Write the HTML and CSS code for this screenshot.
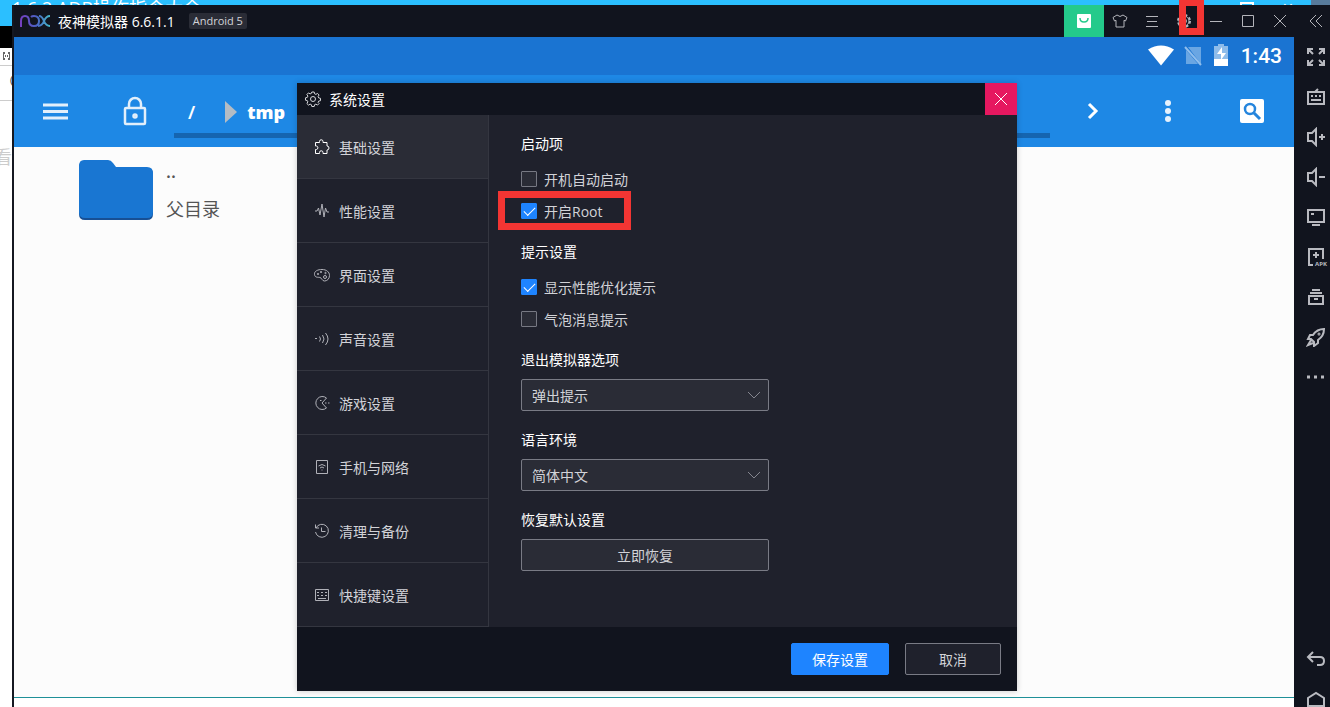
FILE: index.html
```html
<!DOCTYPE html>
<html lang="zh-CN">
<head>
  <meta charset="UTF-8">
  <title>夜神模拟器</title>
  <meta name="viewport" content="width=device-width, initial-scale=1.0">
  <link rel="stylesheet" href="styles.css">
</head>
<body>
  <div class="backdrop">
    <span class="backdrop-title">1.6.2 ADB操作指令大全</span>
    <span class="backdrop-box"></span>
    <span class="backdrop-close">✕</span>
    <span class="backdrop-corner"></span>
  </div>

  <div class="desktop">
    <div class="behind">
      <div class="behind-blue"></div>
      <div class="behind-black"></div>
      <div class="behind-tab">
        <svg width="12" height="12" viewBox="0 0 12 12"><path d="M3 2h2v2H3zM3 8h2v2H3zM5 5h1v2H5zM8 2h2v2H8zM8 8h2v2H8zM7 5h1v2H7zM3 4h1v4H3zM9 4h1v4H9z" fill="#666"/></svg>
      </div>
      <div class="behind-bar">(</div>
      <div class="behind-page">看</div>
    </div>

    <div class="window">
      <header class="titlebar">
        <svg class="logo" width="32" height="14" viewBox="0 0 32 14" fill="none" stroke-width="2">
          <defs>
            <linearGradient id="nox" x1="0" y1="0" x2="32" y2="0" gradientUnits="userSpaceOnUse">
              <stop offset="0" stop-color="#7a3cc0"/>
              <stop offset="0.55" stop-color="#4a62c4"/>
              <stop offset="1" stop-color="#45c0c8"/>
            </linearGradient>
          </defs>
          <path d="M2 13V7q0-5 4-5t4 5q0 5 5 5t5-5-5-5q-2 0-3 1M20 2q3 0 5 5t6 5M31 2q-4 0-6 5t-6 5" stroke="url(#nox)"/>
        </svg>
        <span class="app-name">夜神模拟器 6.6.1.1</span>
        <span class="badge">Android 5</span>
        <div class="title-actions">
          <button class="title-btn store" aria-label="应用中心">
            <svg width="16" height="16" viewBox="0 0 16 16"><rect x="1" y="1" width="14" height="14" rx="1" fill="#fff"/><path d="M4 5q0 4 4 4t4-4" fill="none" stroke="#24ca8b" stroke-width="1.500"/></svg>
          </button>
          <button class="title-btn" aria-label="主题">
            <svg width="16" height="16" viewBox="0 0 16 16"><path d="M5 2L1 4.500 2.500 8 4 7.300V14h8V7.300L13.500 8 15 4.500 11 2Q8 5 5 2z"/></svg>
          </button>
          <button class="title-btn" aria-label="菜单">
            <svg width="16" height="16" viewBox="0 0 16 16"><path d="M2 3.500h12M3 8.500h10M2 13.500h12"/></svg>
          </button>
          <button class="title-btn gear-btn" aria-label="设置">
            <svg width="16" height="16" viewBox="0 0 16 16"><circle cx="8" cy="8" r="2.500"/><circle cx="8" cy="8" r="6" stroke-dasharray="2.700 2" stroke-width="2"/><circle cx="8" cy="8" r="5"/></svg>
            <span class="mark mark-gear"></span>
          </button>
          <button class="title-btn" aria-label="最小化">
            <svg width="16" height="16" viewBox="0 0 16 16"><path d="M2 8.500h12"/></svg>
          </button>
          <button class="title-btn" aria-label="最大化">
            <svg width="16" height="16" viewBox="0 0 16 16"><path d="M2.500 2.500h11v11h-11z"/></svg>
          </button>
          <button class="title-btn" aria-label="关闭">
            <svg width="16" height="16" viewBox="0 0 16 16"><path d="M2 2l12 12M14 2L2 14"/></svg>
          </button>
          <button class="title-btn collapse" aria-label="收起">
            <svg width="16" height="16" viewBox="0 0 16 16"><path d="M8 2L2 8l6 6M14 2L8 8l6 6"/></svg>
          </button>
        </div>
      </header>

      <div class="window-body">
        <div class="screen">
          <div class="statusbar">
            <svg width="28" height="24" viewBox="0 0 28 24"><path d="M1 5.500Q14-2.500 27 5.500L14 21.500z" fill="#fff"/></svg>
            <svg width="22" height="24" viewBox="0 0 22 24"><path d="M5 3h13v17zM3 6v14h12z" fill="#6aa6e3"/><path d="M2 3l16 18" stroke="#8fbdec" stroke-width="2"/></svg>
            <svg width="16" height="24" viewBox="0 0 16 24"><path d="M5 0h6v2h4v13H1V2h4z" fill="#8ebcea"/><path d="M1 15h14v7H1z" fill="#fff"/><path d="M9 3L4 10h4v6l5-7H9z" fill="#fff"/></svg>
            <span class="clock">1:43</span>
          </div>

          <div class="appbar">
            <button class="bar-btn" aria-label="菜单">
              <svg width="28" height="24" viewBox="0 0 28 24"><path d="M2 6h25M2 12.500h25M2 19h25" stroke="#e2effb" stroke-width="3"/></svg>
            </button>
            <button class="bar-btn" aria-label="锁定">
              <svg width="24" height="30" viewBox="0 0 24 30" fill="none" stroke="#e2effb" stroke-width="2.500"><rect x="2" y="12" width="20" height="16" rx="1"/><path d="M6 12V8a6 6 0 0 1 12 0v4"/><circle cx="12" cy="20" r="1.500"/></svg>
            </button>
            <div class="path">
              <span>/</span>
              <svg width="12" height="22" viewBox="0 0 12 22"><path d="M0 0l12 11L0 22z" fill="#b4bcc4"/></svg>
              <b>tmp</b>
            </div>
            <button class="bar-btn" aria-label="前进">
              <svg width="14" height="20" viewBox="0 0 14 20"><path d="M4 3l7 7-7 7" fill="none" stroke="#fff" stroke-width="3"/></svg>
            </button>
            <button class="bar-btn" aria-label="更多">
              <svg width="8" height="24" viewBox="0 0 8 24" fill="#e6f1fc"><circle cx="4" cy="4" r="3"/><circle cx="4" cy="12" r="3"/><circle cx="4" cy="20" r="3"/></svg>
            </button>
            <button class="bar-btn search" aria-label="搜索">
              <svg width="26" height="26" viewBox="0 0 26 26" fill="none"><rect x="1" y="1" width="24" height="24" rx="2" fill="#fff"/><circle cx="11" cy="11" r="5" stroke="#2585dd" stroke-width="2.500"/><path d="M15 15l6 6" stroke="#2585dd" stroke-width="3"/></svg>
            </button>
          </div>

          <a class="folder" href="#">
            <svg width="76" height="64" viewBox="0 0 76 64"><path d="M6 3h24q3 0 5 3l3 3h31q6 0 6 6v40q0 6-6 6H7q-6 0-6-6V8q0-5 5-5z" fill="#174f94"/><path d="M6 1h24q3 0 5 3l3 4h31q6 0 6 6v39q0 6-6 6H7q-6 0-6-6V7q0-6 5-6z" fill="#1976d2"/></svg>
            <span class="folder-text">
              <span class="dots">..</span>
              <span class="folder-name">父目录</span>
            </span>
          </a>

          <div class="screen-end"></div>

          <form class="dialog">
            <div class="dialog-head">
              <svg width="16" height="16" viewBox="0 0 16 16"><circle cx="8" cy="8" r="2.500"/><path d="M6.800 1h2.400l.4 1.800 1.300.6 1.600-1 1.600 1.600-1 1.600.6 1.300 1.800.4v2.400l-1.800.4-.6 1.300 1 1.100-1.600 1.600-1.600-1-1.300.6-.4 1.800H6.800l-.4-1.800-1.300-.6-1.600 1-1.600-1.600 1-1.600-.6-1.300L.5 9.200V6.800l1.800-.4.6-1.300-1-1.600 1.600-1.600 1.600 1 1.300-.6z"/></svg>
              <span>系统设置</span>
              <button type="button" class="dialog-close" aria-label="关闭">
                <svg width="16" height="16" viewBox="0 0 16 16"><path d="M2 2l12 12M14 2L2 14"/></svg>
              </button>
            </div>

            <div class="dialog-body">
              <nav class="menu">
                <a class="menu-item active" href="#">
                  <svg width="16" height="16" viewBox="0 0 16 16"><path d="M1.500 3.500h4V2.500a1.500 1.500 0 0 1 3.500 0v1h4v3.500a2 2 0 0 1 0 4v3.500h-4v-1a1.700 1.700 0 0 0-3.500 0v1h-4v-4h1a1.800 1.800 0 0 0 0-3.500h-1z"/></svg>
                  基础设置
                </a>
                <a class="menu-item" href="#">
                  <svg width="16" height="16" viewBox="0 0 16 16"><path d="M1 8h2l1.500-3L6 12 8 1l2 13 1.500-9L13 9h2"/></svg>
                  性能设置
                </a>
                <a class="menu-item" href="#">
                  <svg width="16" height="16" viewBox="0 0 16 16"><path d="M8 2.500c4.500 0 7.500 2.500 7.500 6S13 14 10.500 14 8 11 6 10.500 1 11 .5 7.500 4 2.500 8 2.500z"/><circle cx="4" cy="7" r=".7"/><circle cx="7" cy="5" r=".7"/><circle cx="11.500" cy="6" r=".7"/><circle cx="11" cy="10" r="1.500"/></svg>
                  界面设置
                </a>
                <a class="menu-item" href="#">
                  <svg width="16" height="16" viewBox="0 0 16 16"><path d="M1 7.500h2M5.500 5.500q2 2.500 0 5M8.500 4q3 4 0 8M11.500 2q5 6 0 12"/></svg>
                  声音设置
                </a>
                <a class="menu-item" href="#">
                  <svg width="16" height="16" viewBox="0 0 16 16"><path d="M12.500 3A6.500 6.500 0 1 0 12.500 13L8 8z"/><path d="M6 5.500h1.500M11 8h1.500M14 8h1.500"/></svg>
                  游戏设置
                </a>
                <a class="menu-item" href="#">
                  <svg width="16" height="16" viewBox="0 0 16 16"><path d="M2.500 1.500h11v13h-11zM4.500 7q3.500-3 7 0M6 9q2-2 4 0M7.500 11h1"/></svg>
                  手机与网络
                </a>
                <a class="menu-item" href="#">
                  <svg width="16" height="16" viewBox="0 0 16 16"><path d="M1.500 1.500v3.500h3.500M2 5a6.500 6.500 0 1 1-.5 4M7.500 4.500v4h4"/></svg>
                  清理与备份
                </a>
                <a class="menu-item" href="#">
                  <svg width="16" height="16" viewBox="0 0 16 16"><path d="M1.500 2.500h13v11h-13z"/><path d="M3 5.500h10M3 8.500h10" stroke-dasharray="2 2"/><path d="M4 11.500h8"/></svg>
                  快捷键设置
                </a>
              </nav>

              <div class="settings">
                <section class="group">
                  <h2>启动项</h2>
                  <label class="check"><input type="checkbox">开机自动启动</label>
                  <label class="check"><input type="checkbox" checked>开启Root<span class="mark mark-root"></span></label>
                </section>
                <section class="group">
                  <h2>提示设置</h2>
                  <label class="check"><input type="checkbox" checked>显示性能优化提示</label>
                  <label class="check"><input type="checkbox">气泡消息提示</label>
                </section>
                <section class="group field">
                  <h2><label for="exit">退出模拟器选项</label></h2>
                  <div class="select">
                    <select id="exit"><option>弹出提示</option></select>
                    <svg width="14" height="8" viewBox="0 0 14 8"><path d="M1 1l6 6 6-6"/></svg>
                  </div>
                </section>
                <section class="group field">
                  <h2><label for="lang">语言环境</label></h2>
                  <div class="select">
                    <select id="lang"><option>简体中文</option></select>
                    <svg width="14" height="8" viewBox="0 0 14 8"><path d="M1 1l6 6 6-6"/></svg>
                  </div>
                </section>
                <section class="group field">
                  <h2>恢复默认设置</h2>
                  <button type="button" class="btn restore">立即恢复</button>
                </section>
              </div>
            </div>

            <div class="dialog-foot">
              <button type="button" class="btn primary">保存设置</button>
              <button type="button" class="btn">取消</button>
            </div>
          </form>
        </div>

        <aside class="tools">
          <button aria-label="全屏"><svg width="20" height="20" viewBox="0 0 20 20"><path d="M2 7V2h5M2 2l5 5M13 2h5v5M18 2l-5 5M2 13v5h5M2 18l5-5M18 13v5h-5M18 18l-5-5"/></svg></button>
          <button aria-label="键盘"><svg width="20" height="20" viewBox="0 0 20 20"><path d="M2 5h16v12H2zM9 5l3-3M5 9h2M9 9h2M13 9h2M5 13h10"/></svg></button>
          <button aria-label="音量加"><svg width="20" height="20" viewBox="0 0 20 20"><path d="M2 6h4l4-4v16l-4-4H2zM13 10h6M16 7v6"/></svg></button>
          <button aria-label="音量减"><svg width="20" height="20" viewBox="0 0 20 20"><path d="M2 6h4l4-4v16l-4-4H2zM13 10h6"/></svg></button>
          <button aria-label="屏幕"><svg width="20" height="20" viewBox="0 0 20 20"><path d="M2 3h16v12H2zM6 18h8M5 7h3"/></svg></button>
          <button aria-label="安装APK" class="apk"><svg width="20" height="20" viewBox="0 0 20 20"><path d="M7 18H3V2h14v10M10 5v6M7 8h6"/></svg><span>APK</span></button>
          <button aria-label="多开"><svg width="20" height="20" viewBox="0 0 20 20"><path d="M3 9h14v8H3zM4 6h12M6 3h8M8 12h4"/></svg></button>
          <button aria-label="加速"><svg width="20" height="20" viewBox="0 0 20 20"><path d="M18 2Q11 2 7 8H4l-2 4 3 0 3 3v4l4-3v-3q6-4 6-11zM5 13l-3 5 5-2"/><circle cx="13" cy="7" r=".5"/></svg></button>
          <button aria-label="更多"><svg width="20" height="20" viewBox="0 0 20 20"><path d="M1 10h3M8 10h3M15 10h3" stroke-width="3"/></svg></button>
          <div class="nav-keys">
            <button aria-label="返回"><svg width="20" height="20" viewBox="0 0 20 20"><path d="M7 3L2 8l5 5M2 8h12q4 0 4 4t-4 4h-3"/></svg></button>
            <button aria-label="主页"><svg width="20" height="20" viewBox="0 0 20 20"><path d="M2 17V9l8-5 8 5v8z"/></svg></button>
          </div>
        </aside>
      </div>
    </div>
  </div>
</body>
</html>
```
FILE: styles.css
```css
* {
  box-sizing: border-box;
}

body {
  margin: 0;
  height: 100vh;
  display: flex;
  flex-direction: column;
  overflow: hidden;
  background: #fff;
  font-family: "Open Sans", "Noto Sans CJK SC", sans-serif;
  font-size: 14px;
  color: #d2d3d8;
}

button {
  padding: 0;
  border: none;
  background: none;
  font: inherit;
  color: inherit;
}

a {
  color: inherit;
  text-decoration: none;
}

svg {
  flex: none;
  display: block;
}

/* window behind */
.backdrop {
  flex: none;
  height: 5px;
  display: flex;
  overflow: hidden;
  background: #2bbfff;
  color: #fff;
  line-height: 16px;
}

.backdrop-title {
  flex: 1;
  padding-left: 12px;
  font-size: 18px;
}

.backdrop-box {
  width: 14px;
  height: 12px;
  margin: 2px 28px 0 0;
  border: 2px solid #fff;
}

.backdrop-close {
  width: 29px;
}

.backdrop-corner {
  width: 19px;
  background: #587b9c;
}

.desktop {
  flex: 1;
  min-height: 0;
  display: flex;
}

.behind {
  width: 12px;
  display: flex;
  flex-direction: column;
  overflow: hidden;
}

.behind-blue {
  height: 21px;
  background: #2bbfff;
}

.behind-black {
  height: 22px;
  background: #000;
}

.behind-tab {
  height: 18px;
  padding-top: 2px;
  border-bottom: 1px solid #ccc;
}

.behind-bar {
  height: 35px;
  padding-left: 10px;
  border-bottom: 1px solid #ccc;
  color: #333;
  font-size: 11px;
  line-height: 28px;
}

.behind-page {
  padding-top: 46px;
  color: #ccc;
  font-size: 18px;
  line-height: 20px;
  direction: rtl;
}

/* emulator window */
.window {
  flex: 1;
  min-width: 0;
  display: flex;
  flex-direction: column;
  border-left: 2px solid #151821;
}

.titlebar {
  flex: none;
  height: 32px;
  display: flex;
  align-items: center;
  padding-left: 5px;
  background: #11141e;
}

.app-name {
  margin-left: 7px;
  color: #fff;
}

.badge {
  margin-left: 14px;
  padding: 0 4px;
  border-radius: 2px;
  background: #2a2c36;
  font-size: 11px;
  line-height: 16px;
}

.title-actions {
  margin-left: auto;
  display: flex;
}

.title-btn {
  width: 32px;
  height: 32px;
  display: flex;
  align-items: center;
  justify-content: center;
}

.title-btn svg {
  fill: none;
  stroke: #b4b5bb;
}

.title-btn.store {
  width: 40px;
  background: #24ca8b;
}

.title-btn.store svg {
  stroke: none;
}

.title-btn.collapse {
  width: 34px;
  padding-left: 6px;
}

.gear-btn {
  position: relative;
}

.mark {
  position: absolute;
  border: 7px solid #f33533;
}

.mark-gear {
  left: 11px;
  top: -6px;
  width: 25px;
  height: 36px;
}

.window-body {
  flex: 1;
  min-height: 0;
  display: flex;
}

.screen {
  position: relative;
  flex: 1;
  min-width: 0;
  display: flex;
  flex-direction: column;
  background: #fcfcfc;
}

.statusbar {
  flex: none;
  height: 38px;
  display: flex;
  align-items: center;
  justify-content: flex-end;
  gap: 8px;
  padding-right: 12px;
  background: #1a74d2;
}

.clock {
  margin-left: 4px;
  color: #fff;
  font: 500 21px/24px Roboto, sans-serif;
}

.appbar {
  flex: none;
  height: 72px;
  display: grid;
  grid-template-columns: 82px 78px 1fr 84px 68px 92px;
  align-items: center;
  background: #1e88e5;
}

.bar-btn {
  display: flex;
  justify-content: center;
}

.bar-btn.search {
  padding-left: 8px;
}

.path {
  height: 52px;
  margin-top: 2px;
  padding: 4px 0 0 14px;
  display: flex;
  align-items: center;
  border-bottom: 5px solid #1565b0;
  color: #fff;
  font-family: "Noto Sans", sans-serif;
  font-size: 18px;
  font-weight: 600;
}

.path svg {
  margin: 0 10px 0 30px;
}

.folder {
  display: flex;
  gap: 12px;
  padding: 12px 0 0 64px;
  color: #555;
  font-size: 18px;
}

.folder-text {
  display: flex;
  flex-direction: column;
  line-height: 36px;
}

.dots {
  margin-bottom: 8px;
  font-weight: 600;
  line-height: 24px;
}

.screen-end {
  flex: none;
  margin-top: auto;
  height: 10px;
  border-top: 1px solid #1f9098;
  background: #fff;
}

/* settings dialog */
.dialog {
  position: absolute;
  left: 283px;
  top: 46px;
  width: 720px;
  background: #1f212c;
  box-shadow: 0 0 6px rgba(0, 0, 0, 0.2);
}

.dialog-head {
  height: 32px;
  display: flex;
  align-items: center;
  gap: 8px;
  padding-left: 8px;
  background: #11141e;
  color: #fff;
}

.dialog-head svg {
  fill: none;
  stroke: #d5d6da;
}

.dialog-close {
  margin-left: auto;
  width: 32px;
  height: 32px;
  display: flex;
  align-items: center;
  justify-content: center;
  background: #e61860;
}

.dialog-close svg {
  stroke: #fff;
}

.dialog-body {
  display: flex;
}

.menu {
  width: 192px;
  border-right: 1px solid #343640;
}

.menu-item {
  height: 64px;
  display: flex;
  align-items: center;
  gap: 9px;
  padding-left: 17px;
  border-bottom: 1px solid #343640;
}

.menu-item svg {
  fill: none;
  stroke: #b0b1b8;
}

.menu-item.active {
  background: #2a2c36;
}

.menu-item.active svg {
  stroke: #fff;
}

.settings {
  flex: 1;
  padding: 17px 32px 0;
}

.group {
  width: 248px;
  margin-bottom: 13px;
}

.group.field {
  margin-bottom: 17px;
}

.group h2 {
  margin: 0 0 7px;
  color: #fff;
  font-size: 14px;
  font-weight: 400;
  line-height: 24px;
}

.check {
  position: relative;
  height: 32px;
  display: flex;
  align-items: center;
  gap: 7px;
}

.check input {
  appearance: none;
  width: 16px;
  height: 16px;
  margin: 0;
  border: 1px solid #777983;
  border-radius: 1px;
  background: #2a2c36;
}

.check input:checked {
  display: flex;
  justify-content: center;
  border-color: #1e84ff;
  background: #1e84ff;
}

.check input:checked::after {
  content: "";
  width: 10px;
  height: 5px;
  margin-top: 3px;
  border: solid #fff;
  border-width: 0 0 1px 1px;
  transform: rotate(-45deg);
}

.mark-root {
  left: -23px;
  top: -4px;
  width: 133px;
  height: 39px;
}

.select {
  display: grid;
  align-items: center;
}

.select select,
.select svg {
  grid-area: 1 / 1;
}

.select svg {
  justify-self: end;
  margin-right: 8px;
  fill: none;
  stroke: #85868f;
  pointer-events: none;
}

select,
.btn {
  height: 32px;
  border: 1px solid #797b85;
  border-radius: 2px;
  background: #2a2c36;
  color: #d2d3d8;
  font: inherit;
}

select {
  appearance: none;
  width: 100%;
  padding: 0 10px;
}

.restore {
  width: 100%;
}

.dialog-foot {
  height: 64px;
  display: flex;
  align-items: center;
  justify-content: flex-end;
  gap: 16px;
  padding-right: 16px;
  background: #11141e;
}

.dialog-foot .btn {
  width: 96px;
  background: #1f212c;
}

.dialog-foot .primary {
  width: 98px;
  border-color: #1e84ff;
  background: #1e84ff;
  color: #fff;
}

/* right toolbar */
.tools {
  width: 36px;
  display: flex;
  flex-direction: column;
  overflow: hidden;
  padding-left: 8px;
  background: #11141e;
}

.tools button {
  flex: none;
  width: 28px;
  height: 40px;
  display: flex;
  align-items: center;
  justify-content: center;
}

.tools svg {
  fill: none;
  stroke: #b9bac0;
  stroke-width: 2;
}

.tools .apk {
  position: relative;
}

.apk span {
  position: absolute;
  right: 3px;
  bottom: 9px;
  color: #b9bac0;
  font-size: 6px;
  font-weight: 700;
  line-height: 8px;
}

.nav-keys {
  margin: auto 0 -12px;
}
```
